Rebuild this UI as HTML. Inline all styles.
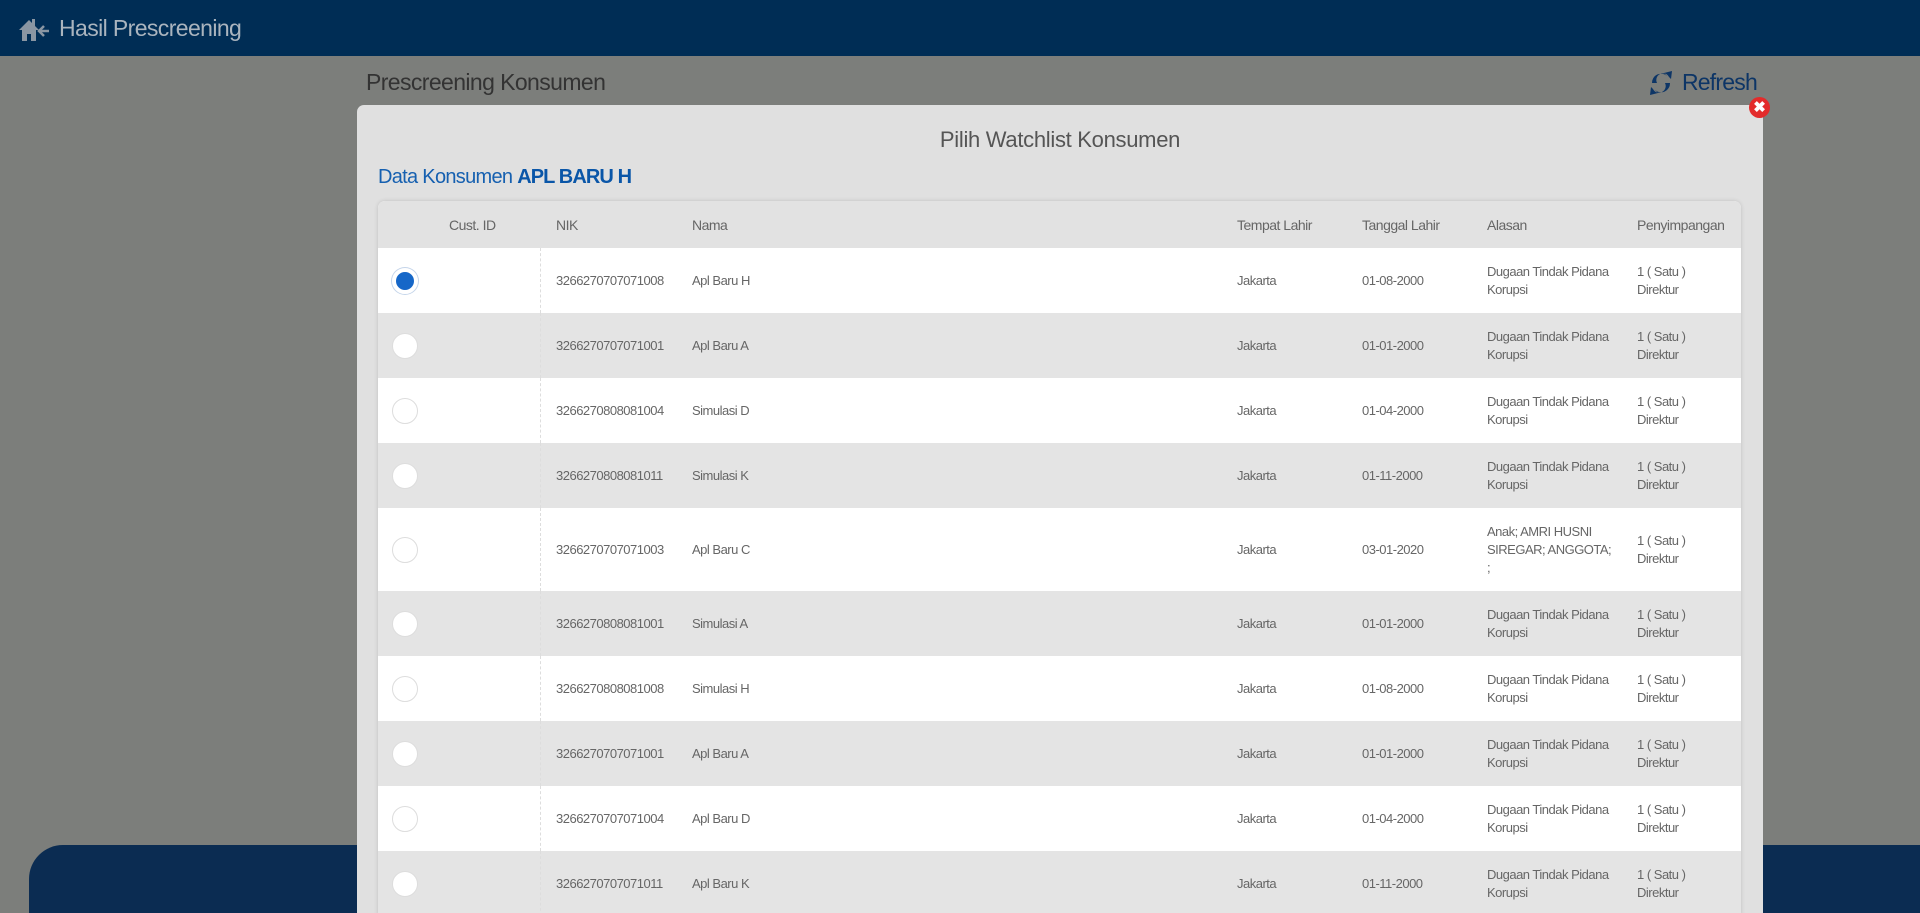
<!DOCTYPE html>
<html><head><meta charset="utf-8"><style>
*{box-sizing:border-box;margin:0;padding:0}
html,body{width:1920px;height:913px;overflow:hidden}
body{background:#7c7e7b;font-family:"Liberation Sans",sans-serif;position:relative}
.hdr{position:absolute;left:0;top:0;width:1920px;height:56px;background:#002d55}
.hdr .t{position:absolute;left:59px;top:15px;font-size:23px;letter-spacing:-0.6px;color:#aab4be}
.pk{position:absolute;left:366px;top:69px;font-size:23px;letter-spacing:-0.6px;color:#333}
.rf{position:absolute;left:1682px;top:69px;font-size:23px;letter-spacing:-0.8px;color:#0d3566}
.bar{position:absolute;left:29px;top:845px;width:1891px;height:68px;background:#0b2c52;border-radius:34px 0 0 0}
.modal{position:absolute;left:357px;top:105px;width:1406px;height:808px;background:#e0e0e0;border-radius:7px 7px 0 0;overflow:hidden}
.mt{position:absolute;left:0;width:100%;top:22px;text-align:center;font-size:22px;letter-spacing:-0.3px;color:#555}
.dk{position:absolute;left:21px;top:61px;font-size:20px;letter-spacing:-0.7px;color:#1660b0}
.dk b{color:#0a56a8;letter-spacing:-0.9px}
.tbl{position:absolute;left:21px;top:96px;width:1363px;background:#fff;border-radius:7px 7px 0 0;box-shadow:0 0 4px rgba(0,0,0,.15);overflow:hidden}
.row{position:relative;height:65px;font-size:13px;letter-spacing:-0.5px;color:#666}
.row.h{height:47px;background:#e2e2e2;color:#666;font-size:14px}
.row.g{background:#e4e4e4}
.row.w{background:#fff}
.row.tall{height:83px}
.c{position:absolute;top:50%;transform:translateY(-50%);line-height:18px}
.div{position:absolute;left:162px;top:0;bottom:0;border-left:1px dashed #ddd}
.rad{position:absolute;left:14px;top:50%;margin-top:-13px;width:26px;height:26px;border-radius:50%;background:#fff;border:1px solid #ddd}
.rad.s{background:#1667c8;border:4px solid #fff;box-shadow:0 0 0 1px #c5d5ea}
.x{position:absolute;left:1749px;top:97px;width:21px;height:21px;border-radius:50%;background:#e32b2b;color:#fff;font-size:15px;font-weight:bold;text-align:center;line-height:21px}
</style></head><body>
<div class="hdr">
<svg style="position:absolute;left:18px;top:18px" width="32" height="24" viewBox="0 0 32 24"><path d="M1 12 L11 2 L14 5 L14 1 L17 1 L17 8 L21 12 L18 12 L18 23 L13 23 L13 16 L9 16 L9 23 L4 23 L4 12 Z" fill="#8a96a3"/><path d="M31 13 H22 M26 8 L21 13 L26 18" stroke="#8a96a3" stroke-width="2.5" fill="none"/></svg>
<div class="t">Hasil Prescreening</div></div>
<div class="pk">Prescreening Konsumen</div>
<svg style="position:absolute;left:1649px;top:68px" width="24" height="30" viewBox="0 0 24 30"><path d="M3 15 A9 9 0 0 1 18 8 L15 5 L23 3 L22 11 L20 9 A6 6 0 0 0 8 15 Z" fill="#0d3566"/><path d="M21 15 A9 9 0 0 1 6 22 L9 25 L1 27 L2 19 L4 21 A6 6 0 0 0 16 15 Z" fill="#0d3566"/></svg>
<div class="rf">Refresh</div>
<div class="bar"></div>
<div class="modal">
<div class="mt">Pilih Watchlist Konsumen</div>
<div class="dk">Data Konsumen <b>APL BARU H</b></div>
<div class="tbl">
<div class="row h"><div class="c" style="left:71px">Cust. ID</div><div class="c" style="left:178px">NIK</div><div class="c" style="left:314px">Nama</div><div class="c" style="left:859px">Tempat Lahir</div><div class="c" style="left:984px">Tanggal Lahir</div><div class="c" style="left:1109px">Alasan</div><div class="c" style="left:1259px">Penyimpangan</div></div>
<div class="row w"><div class="div"></div><div class="rad s"></div><div class="c" style="left:178px">3266270707071008</div><div class="c" style="left:314px">Apl Baru H</div><div class="c" style="left:859px">Jakarta</div><div class="c" style="left:984px">01-08-2000</div><div class="c" style="left:1109px">Dugaan Tindak Pidana<br>Korupsi</div><div class="c" style="left:1259px">1 ( Satu )<br>Direktur</div></div>
<div class="row g"><div class="div"></div><div class="rad"></div><div class="c" style="left:178px">3266270707071001</div><div class="c" style="left:314px">Apl Baru A</div><div class="c" style="left:859px">Jakarta</div><div class="c" style="left:984px">01-01-2000</div><div class="c" style="left:1109px">Dugaan Tindak Pidana<br>Korupsi</div><div class="c" style="left:1259px">1 ( Satu )<br>Direktur</div></div>
<div class="row w"><div class="div"></div><div class="rad"></div><div class="c" style="left:178px">3266270808081004</div><div class="c" style="left:314px">Simulasi D</div><div class="c" style="left:859px">Jakarta</div><div class="c" style="left:984px">01-04-2000</div><div class="c" style="left:1109px">Dugaan Tindak Pidana<br>Korupsi</div><div class="c" style="left:1259px">1 ( Satu )<br>Direktur</div></div>
<div class="row g"><div class="div"></div><div class="rad"></div><div class="c" style="left:178px">3266270808081011</div><div class="c" style="left:314px">Simulasi K</div><div class="c" style="left:859px">Jakarta</div><div class="c" style="left:984px">01-11-2000</div><div class="c" style="left:1109px">Dugaan Tindak Pidana<br>Korupsi</div><div class="c" style="left:1259px">1 ( Satu )<br>Direktur</div></div>
<div class="row w tall"><div class="div"></div><div class="rad"></div><div class="c" style="left:178px">3266270707071003</div><div class="c" style="left:314px">Apl Baru C</div><div class="c" style="left:859px">Jakarta</div><div class="c" style="left:984px">03-01-2020</div><div class="c" style="left:1109px">Anak; AMRI HUSNI<br>SIREGAR; ANGGOTA;<br>;</div><div class="c" style="left:1259px">1 ( Satu )<br>Direktur</div></div>
<div class="row g"><div class="div"></div><div class="rad"></div><div class="c" style="left:178px">3266270808081001</div><div class="c" style="left:314px">Simulasi A</div><div class="c" style="left:859px">Jakarta</div><div class="c" style="left:984px">01-01-2000</div><div class="c" style="left:1109px">Dugaan Tindak Pidana<br>Korupsi</div><div class="c" style="left:1259px">1 ( Satu )<br>Direktur</div></div>
<div class="row w"><div class="div"></div><div class="rad"></div><div class="c" style="left:178px">3266270808081008</div><div class="c" style="left:314px">Simulasi H</div><div class="c" style="left:859px">Jakarta</div><div class="c" style="left:984px">01-08-2000</div><div class="c" style="left:1109px">Dugaan Tindak Pidana<br>Korupsi</div><div class="c" style="left:1259px">1 ( Satu )<br>Direktur</div></div>
<div class="row g"><div class="div"></div><div class="rad"></div><div class="c" style="left:178px">3266270707071001</div><div class="c" style="left:314px">Apl Baru A</div><div class="c" style="left:859px">Jakarta</div><div class="c" style="left:984px">01-01-2000</div><div class="c" style="left:1109px">Dugaan Tindak Pidana<br>Korupsi</div><div class="c" style="left:1259px">1 ( Satu )<br>Direktur</div></div>
<div class="row w"><div class="div"></div><div class="rad"></div><div class="c" style="left:178px">3266270707071004</div><div class="c" style="left:314px">Apl Baru D</div><div class="c" style="left:859px">Jakarta</div><div class="c" style="left:984px">01-04-2000</div><div class="c" style="left:1109px">Dugaan Tindak Pidana<br>Korupsi</div><div class="c" style="left:1259px">1 ( Satu )<br>Direktur</div></div>
<div class="row g"><div class="div"></div><div class="rad"></div><div class="c" style="left:178px">3266270707071011</div><div class="c" style="left:314px">Apl Baru K</div><div class="c" style="left:859px">Jakarta</div><div class="c" style="left:984px">01-11-2000</div><div class="c" style="left:1109px">Dugaan Tindak Pidana<br>Korupsi</div><div class="c" style="left:1259px">1 ( Satu )<br>Direktur</div></div>
</div>
</div>
<div class="x">✖</div>
</body></html>
